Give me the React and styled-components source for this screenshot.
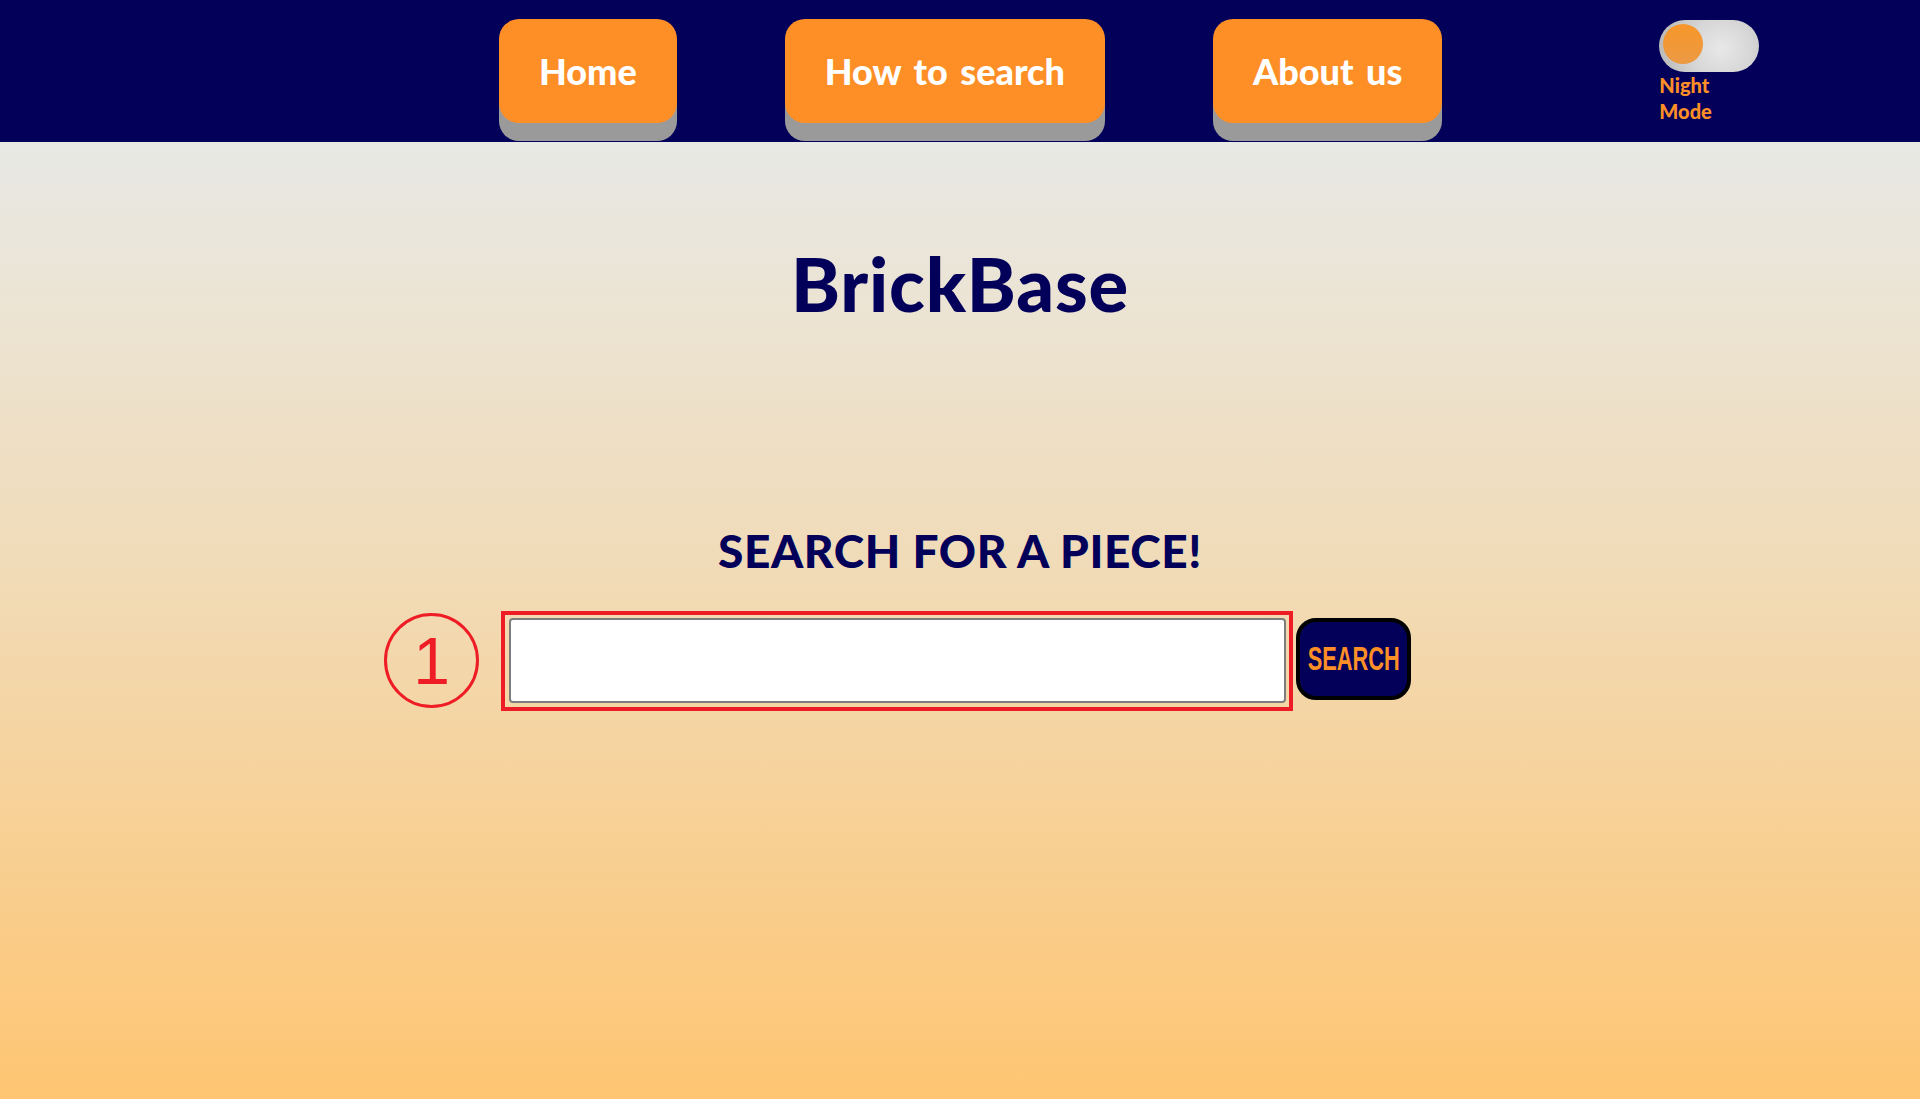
import styled, { createGlobalStyle } from "styled-components";

const GlobalStyle = createGlobalStyle`
  html, body {
    margin: 0;
    padding: 0;
  }
  body {
    font-family: "Lato", "Noto Sans", sans-serif;
  }
`;

const Page = styled.div`
  display: flex;
  flex-direction: column;
  min-height: 100vh;
`;

const NavBar = styled.nav`
  align-items: flex-start;
  background-color: #03005a;
  box-sizing: border-box;
  display: flex;
  height: 142px;
  padding: 19px 0 0 499px;
`;

const NavLinks = styled.div`
  display: flex;
  gap: 108px;
`;

const NavButton = styled.button`
  background-color: #fe8f27;
  border: none;
  border-radius: 20px;
  box-shadow: 0 18px 0 #9a9a9a;
  color: #fff;
  font-family: "Lato", sans-serif;
  font-size: 36px;
  font-weight: 900;
  height: 104px;
  padding: 0 40px;
  word-spacing: 4px;
  &:hover {
    cursor: pointer;
  }
`;

const ToggleBox = styled.div`
  margin-left: 217px;
  margin-top: 1px;
`;

const Switch = styled.div`
  background: radial-gradient(circle at 62% 55%, #e8e8e8 0%, #d6d6d6 45%, #b4b4b4 100%);
  border-radius: 26px;
  box-sizing: border-box;
  height: 52px;
  padding: 4px;
  width: 100px;
`;

const Knob = styled.div`
  background: linear-gradient(#f7962a, #ec9a44);
  border-radius: 50%;
  height: 40px;
  width: 40px;
`;

const ToggleLabel = styled.div`
  color: #fe8f27;
  font-size: 20px;
  font-weight: 900;
  line-height: 26px;
  margin-top: 0;
`;

const Main = styled.main`
  align-items: center;
  background: linear-gradient(#e8e9e5 0%, #f1dbb7 45%, #fec572 100%);
  display: flex;
  flex: 1;
  flex-direction: column;
`;

const Title = styled.h1`
  color: #03005a;
  font-size: 74px;
  font-weight: 900;
  letter-spacing: 0.8px;
  line-height: 1;
  margin: 105px 0 0;
`;

const Subtitle = styled.h2`
  color: #03005a;
  font-size: 46px;
  font-weight: 900;
  letter-spacing: 0.6px;
  line-height: 1;
  margin: 207px 0 0;
`;

const SearchRow = styled.div`
  align-items: flex-start;
  display: flex;
  gap: 10px;
  margin-top: 44px;
  position: relative;
`;

const StepMarker = styled.div`
  align-items: center;
  border: 3px solid #ee1c25;
  border-radius: 50%;
  box-sizing: border-box;
  color: #ee1c25;
  display: flex;
  font-family: "Liberation Sans", sans-serif;
  font-size: 66px;
  height: 95px;
  justify-content: center;
  left: -125px;
  position: absolute;
  top: -5px;
  width: 95px;
`;

const Highlight = styled.div`
  position: relative;
  &::after {
    border: 4px solid #ee1c25;
    bottom: -8px;
    content: "";
    left: -8px;
    pointer-events: none;
    position: absolute;
    right: -7px;
    top: -7px;
  }
`;

const SearchInput = styled.input`
  background: #fff;
  border: 2px solid #7d7d7d;
  border-radius: 4px;
  box-sizing: border-box;
  display: block;
  font-size: 24px;
  height: 85px;
  padding: 0 12px;
  width: 777px;
`;

const SearchButton = styled.button`
  align-items: center;
  background-color: #03005a;
  border: 4px solid #000;
  border-radius: 20px;
  box-sizing: border-box;
  color: #fe8f27;
  display: flex;
  height: 82px;
  justify-content: center;
  padding: 0;
  width: 115px;
  &:hover {
    cursor: pointer;
  }
`;

const ButtonText = styled.span`
  display: inline-block;
  font-family: "Liberation Sans", sans-serif;
  font-size: 33px;
  font-weight: 700;
  transform: scaleX(0.66);
`;

function App() {
  return (
    <Page>
      <GlobalStyle />
      <NavBar>
        <NavLinks>
          <NavButton>Home</NavButton>
          <NavButton>How to search</NavButton>
          <NavButton>About us</NavButton>
        </NavLinks>
        <ToggleBox>
          <Switch>
            <Knob />
          </Switch>
          <ToggleLabel>
            Night
            <br />
            Mode
          </ToggleLabel>
        </ToggleBox>
      </NavBar>
      <Main>
        <Title>BrickBase</Title>
        <Subtitle>SEARCH FOR A PIECE!</Subtitle>
        <SearchRow>
          <StepMarker>1</StepMarker>
          <Highlight>
            <SearchInput type="text" />
          </Highlight>
          <SearchButton>
            <ButtonText>SEARCH</ButtonText>
          </SearchButton>
        </SearchRow>
      </Main>
    </Page>
  );
}

export default App;
